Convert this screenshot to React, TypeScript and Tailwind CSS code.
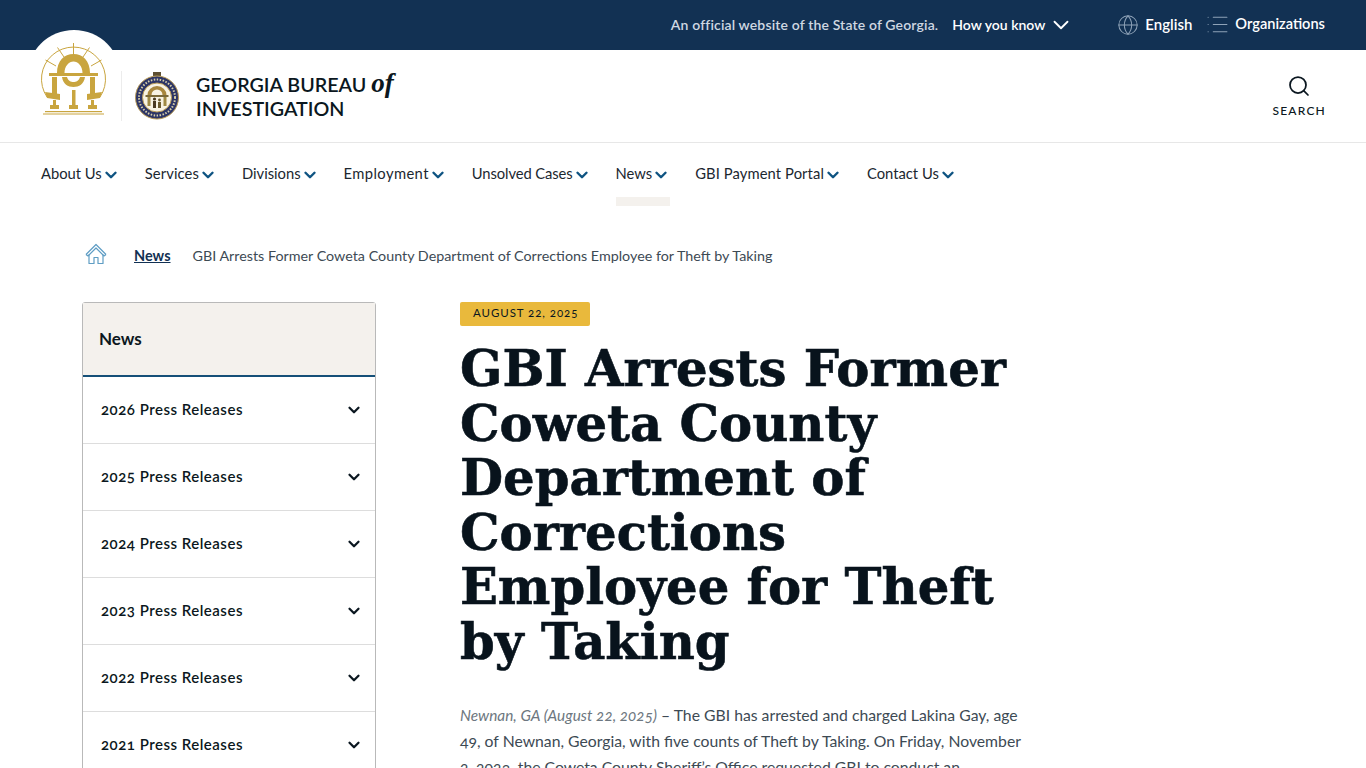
import { ChevronDown, Globe, List, Search } from 'lucide-react';

const navItems = [
  { label: 'About Us', active: false, cls: '' },
  { label: 'Services', active: false, cls: 'tracking-[0.1px]' },
  { label: 'Divisions', active: false, cls: '' },
  { label: 'Employment', active: false, cls: 'tracking-[0.4px]' },
  { label: 'Unsolved Cases', active: false, cls: 'tracking-[-0.1px]' },
  { label: 'News', active: true, cls: '' },
  { label: 'GBI Payment Portal', active: false, cls: 'tracking-[0.1px]' },
  { label: 'Contact Us', active: false, cls: '' },
];

const years = ['2026', '2025', '2024', '2023', '2022', '2021'];

function ArchLogo() {
  const gold = '#c9a53f';
  return (
    <svg viewBox="0 0 66 76" className="w-[66px] h-[76px]" fill="none">
      {/* outer ring and rays */}
      <path d="M6 57 A32 32 0 1 1 59 57" stroke={gold} strokeWidth="1" />
      <path d="M32.5 3 V14 M16.5 7.5 L23 17 M48.5 7.5 L42 17 M4.5 20 L15 26 M60.5 20 L50 26" stroke={gold} strokeWidth="1" />
      {/* arch */}
      <path
        d="M16 33 C16 21 23 14 32.5 14 C42 14 49 21 49 33 H41.5 C41.5 26 37 21.5 32.5 21.5 C28 21.5 23.5 26 23.5 33 Z"
        fill={gold}
      />
      <rect x="8" y="33" width="49" height="3" fill={gold} />
      <path d="M21 37 H44 C43 44 38 47 32.5 47 C27 47 22 44 21 37 Z M26 37 C27 41 30 42 32.5 42 C35 42 38 41 39 37 Z" fill={gold} fillRule="evenodd" />
      {/* columns */}
      <rect x="11" y="37" width="5" height="18" fill={gold} />
      <rect x="49" y="37" width="5" height="18" fill={gold} />
      <rect x="31" y="50" width="3.5" height="18" fill={gold} />
      {/* banners */}
      <path d="M4 52 L19 54 V60 L6 58 Z M61 52 L46 54 V60 L59 58 Z" fill={gold} />
      <rect x="12" y="60" width="3" height="5" fill={gold} />
      <rect x="50" y="60" width="3" height="5" fill={gold} />
      {/* base */}
      <rect x="9" y="65" width="9" height="4" fill={gold} />
      <rect x="28" y="65" width="9" height="4" fill={gold} />
      <rect x="47" y="65" width="9" height="4" fill={gold} />
      <rect x="4" y="71" width="57" height="1.2" fill={gold} />
      <rect x="2" y="73.5" width="61" height="1" fill={gold} />
    </svg>
  );
}

function Seal() {
  return (
    <svg viewBox="0 0 46 50" className="w-[46px] h-[50px]" fill="none">
      <rect x="18" y="1" width="8" height="4" fill="#5d4f32" />
      <circle cx="22" cy="26.5" r="21.5" fill="#2d3566" stroke="#b89a55" strokeWidth="1" />
      <circle cx="22" cy="26.5" r="18" stroke="#d8cfa8" strokeWidth="2" strokeDasharray="1.5 1.5" />
      <circle cx="22" cy="26.5" r="14.5" fill="#f8f3e4" stroke="#b89a55" />
      <path d="M12.5 24 A9.5 9 0 0 1 31.5 24 H27.5 A5.5 5.5 0 0 0 16.5 24 Z" fill="#a8873e" />
      <rect x="10.5" y="24" width="23" height="2" fill="#7b6a3a" />
      <rect x="12.5" y="26" width="3" height="9" fill="#a08a45" />
      <rect x="28.5" y="26" width="3" height="9" fill="#a08a45" />
      <circle cx="19.5" cy="28" r="1.6" fill="#4a3a22" />
      <rect x="18" y="30" width="3" height="7" fill="#4a3a22" />
      <circle cx="24.5" cy="29" r="1.4" fill="#6b5a2e" />
      <rect x="23" y="31" width="3" height="6" fill="#6b5a2e" />
    </svg>
  );
}

function HomeIcon() {
  return (
    <svg viewBox="0 0 22 22" className="w-[22px] h-[22px] mb-[4px]" fill="none" stroke="#5f9dc4" strokeWidth="1.2" strokeLinejoin="round">
      <path d="M1 11.5 L11 1.5 L21 11.5 M1 11.5 L3 13 L11 5 L19 13 L21 11.5" />
      <path d="M4 11.5 V20.5 H9 V14.5 H13 V20.5 H18 V11.5" />
    </svg>
  );
}

export default function App() {
  return (
    <div className="h-screen overflow-hidden bg-white font-['Lato','Open_Sans',sans-serif] text-[#0b1720]">
      {/* Top bar */}
      <div className="h-[50px] pb-[2px] bg-[#123153] flex items-center justify-end pr-[41px] text-[14px] font-semibold text-white">
        <span className="text-[#cfd8e2] mr-[14px] tracking-[0.15px]">An official website of the State of Georgia.</span>
        <span>How you know</span>
        <ChevronDown className="w-[26px] h-[26px] ml-[3px] mr-[43px] mt-[2px]" strokeWidth={1.7} />
        <Globe className="w-[22px] h-[22px] text-[#8fa3b8] mr-[6px] mt-[2px]" strokeWidth={1.1} />
        <span className="mr-[13px] text-[15px]">English</span>
        <List className="w-[25px] h-[25px] text-[#8fa3b8] mr-[5px]" strokeWidth={1.1} />
        <span className="text-[14.6px]">Organizations</span>
      </div>

      {/* Header */}
      <header className="relative h-[93px] border-b border-[#e7e7e7] flex items-center justify-between pl-[41px] pr-[40px]">
        <div className="absolute left-[27px] top-[-20px] w-[94px] h-[94px] rounded-full bg-white" />
        <div className="relative flex items-center">
          <div className="mt-[-36px]">
            <ArchLogo />
          </div>
          <div className="w-px h-[50px] bg-[#ececec] ml-[14px] mr-[13px]" />
          <Seal />
          <div className="ml-[15px] text-[19.7px] leading-[24px] font-semibold">
            <div>
              GEORGIA BUREAU <span className="font-['Liberation_Serif',serif] italic font-bold text-[27px]">of</span>
            </div>
            <div>INVESTIGATION</div>
          </div>
        </div>
        <div className="flex flex-col items-center pt-[2px]">
          <Search className="w-[24px] h-[24px] text-[#0b1720]" strokeWidth={1.75} />
          <span className="mt-[4px] text-[12px] tracking-[1.2px] font-medium">SEARCH</span>
        </div>
      </header>

      {/* Main nav */}
      <nav className="h-[63px] flex pl-[41px] gap-[25px]">
        {navItems.map((item) => (
          <div key={item.label} className="relative flex items-start pt-[21px] h-full text-[14.75px] leading-[18px] text-[#1b2730]">
            <span className={item.cls}>{item.label}</span>
            <ChevronDown className="w-[18px] h-[18px] mt-[2px] text-[#0f5482]" strokeWidth={3.2} />
            {item.active && <div className="absolute left-0 right-0 bottom-0 h-[9px] bg-[#f4f1ed]" />}
          </div>
        ))}
      </nav>

      {/* Breadcrumb */}
      <div className="flex items-center pl-[85px] mt-[37px] h-[26px] text-[14.32px]">
        <HomeIcon />
        <a className="ml-[27px] text-[14.5px] font-bold text-[#123153] underline">News</a>
        <span className="ml-[22px] text-[#3d4a54]">GBI Arrests Former Coweta County Department of Corrections Employee for Theft by Taking</span>
      </div>

      <div className="flex pl-[82px] mt-[32px]">
        {/* Sidebar */}
        <aside className="mt-[1px] w-[294px] shrink-0 self-start border border-[#b9b9b9] rounded-t-[3px]">
          <div className="h-[74px] bg-[#f4f1ed] border-b-2 border-[#154f78] flex items-center pl-[16px] text-[17px] font-bold">
            News
          </div>
          {years.map((y) => (
            <div key={y} className="h-[67px] border-b border-[#dddddd] flex items-center justify-between pl-[18px] pr-[12px] text-[15px] font-semibold tracking-[0.5px]">
              <span className="oldstyle-nums pb-[2px]">{y} Press Releases</span>
              <ChevronDown className="w-[18px] h-[18px]" strokeWidth={3} />
            </div>
          ))}
        </aside>

        {/* Article */}
        <main className="mt-[1px] ml-[84px] w-[566px]">
          <span className="block w-fit h-[24px] leading-[22px] pl-[13px] pr-[12px] rounded-[2px] bg-[#e9b93c] text-[11.5px] tracking-[0.93px] oldstyle-nums">
            AUGUST 22, 2025
          </span>
          <h1 className="mt-[16px] font-['DejaVu_Serif',serif] font-bold text-[49.7px] leading-[54.6px] text-[#08131c] [-webkit-text-stroke:0.6px_#08131c]">
            GBI Arrests Former Coweta County Department of Corrections Employee for Theft by Taking
          </h1>
          <p className="mt-[32px] text-[15.75px] leading-[26px] text-[#3d4a54] oldstyle-nums">
            <em className="text-[15.4px] text-[#6d7780]">Newnan, GA (August 22, 2025)</em> – The GBI has arrested and charged Lakina Gay, age 49, of Newnan, Georgia, with five counts of Theft by Taking. On Friday, November 2, 2023, the Coweta County Sheriff’s Office requested GBI to conduct an investigation.
          </p>
        </main>
      </div>
    </div>
  );
}
